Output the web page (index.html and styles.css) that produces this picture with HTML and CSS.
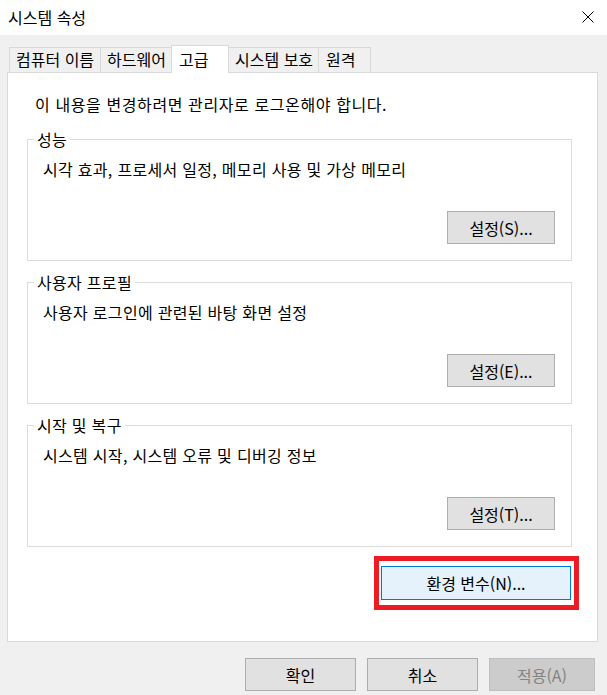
FILE: index.html
```html
<!DOCTYPE html>
<html lang="ko">
<head>
<meta charset="utf-8">
<title>시스템 속성</title>
<link rel="stylesheet" href="styles.css">
</head>
<body>
<div class="window">
  <div class="titlebar">
    <span class="title">시스템 속성</span>
    <span class="close" aria-label="닫기">
      <svg width="12" height="12" viewBox="0 0 12 12"><path d="M0.5 0.5 L11.5 11.5 M11.5 0.5 L0.5 11.5" stroke="#000" stroke-width="1" fill="none"/></svg>
    </span>
  </div>
  <div class="tabs">
    <div class="tab w1">컴퓨터 이름</div>
    <div class="tab w2">하드웨어</div>
    <div class="tab w3 active">고급</div>
    <div class="tab w4">시스템 보호</div>
    <div class="tab w5">원격</div>
  </div>
  <div class="panel">
    <p class="note">이 내용을 변경하려면 관리자로 로그온해야 합니다.</p>
    <div class="group">
      <span class="legend">성능</span>
      <p class="desc">시각 효과, 프로세서 일정, 메모리 사용 및 가상 메모리</p>
      <button class="btn set">설정(S)...</button>
    </div>
    <div class="group">
      <span class="legend">사용자 프로필</span>
      <p class="desc">사용자 로그인에 관련된 바탕 화면 설정</p>
      <button class="btn set">설정(E)...</button>
    </div>
    <div class="group">
      <span class="legend">시작 및 복구</span>
      <p class="desc">시스템 시작, 시스템 오류 및 디버깅 정보</p>
      <button class="btn set">설정(T)...</button>
    </div>
    <div class="highlight">
      <button class="btn env">환경 변수(N)...</button>
    </div>
  </div>
  <div class="footer">
    <button class="btn foot">확인</button>
    <button class="btn foot">취소</button>
    <button class="btn foot disabled">적용(A)</button>
  </div>
</div>
</body>
</html>
```
FILE: styles.css
```css
* { box-sizing: border-box; }
html, body { margin: 0; padding: 0; }
body {
  background: #f0f0f0;
  font-family: "Noto Sans CJK KR", "Noto Sans", sans-serif;
  font-size: 16px;
  letter-spacing: 0.3px;
  color: #000;
  width: 607px;
  height: 695px;
  overflow: hidden;
}
.window { width: 607px; height: 695px; }
.titlebar {
  height: 35px;
  background: #fff;
  display: flex;
  align-items: center;
  justify-content: space-between;
  padding: 0 13px 2px 8px;
}
.title { line-height: 20px; letter-spacing: 0; }
.close { display: flex; width: 12px; height: 12px; }

.tabs {
  display: flex;
  align-items: flex-end;
  height: 27px;
  margin-top: 10px;
  padding-left: 9px;
  position: relative;
  z-index: 2;
}
.tab {
  height: 25px;
  border: 1px solid #d9d9d9;
  border-bottom: none;
  background: #f0f0f0;
  line-height: 23px;
  padding-left: 6px;
  white-space: nowrap;
  margin-left: -1px;
  letter-spacing: 0;
}
.tab:first-child { margin-left: 0; }
.tab.active {
  height: 28px;
  background: #fff;
  margin-bottom: -1px;
  line-height: 26px;
  padding-left: 7px;
  position: relative;
}
.w1 { width: 92px; }
.w2 { width: 72px; }
.w3 { width: 58px; }
.w4 { width: 91px; }
.w5 { width: 53px; padding-left: 7px; }

.panel {
  width: 591px;
  height: 570px;
  margin-left: 7px;
  background: #fff;
  border: 1px solid #d9d9d9;
  padding: 21px 25px 0 19px;
  display: flex;
  flex-direction: column;
}
.note { margin: 0 0 25px 8px; line-height: 20px; letter-spacing: 0.6px; }
.group {
  height: 122px;
  border: 1px solid #dcdcdc;
  display: flex;
  flex-direction: column;
  margin-bottom: 21px;
}
.legend {
  align-self: flex-start;
  background: #fff;
  margin: -11px 0 0 6px;
  padding: 0 3px;
  line-height: 20px;
}
.desc { margin: 10px 0 0 15px; line-height: 20px; }
.btn {
  font-family: inherit;
  font-size: 16px;
  letter-spacing: 0;
  color: #000;
  background: #e1e1e1;
  border: 1px solid #adadad;
  padding: 0;
  margin: 0;
  line-height: 20px;
}
.set {
  width: 108px;
  height: 33px;
  align-self: flex-end;
  margin: auto 16px 16px 0;
}
.highlight {
  align-self: flex-end;
  margin: -12px -7px 0 0;
  border: 5px solid #ed1c24;
  padding: 5px 3px 5px 2px;
  display: flex;
}
.env {
  width: 190px;
  height: 34px;
  background: #e5f1fb;
  border-color: #0078d7;
}
.footer {
  display: flex;
  justify-content: flex-end;
  gap: 11px;
  padding: 16px 12px 0 0;
}
.foot { width: 111px; height: 33px; }
.foot.disabled {
  width: 106px;
  background: #cccccc;
  border-color: #bfbfbf;
  color: #838383;
}
```
